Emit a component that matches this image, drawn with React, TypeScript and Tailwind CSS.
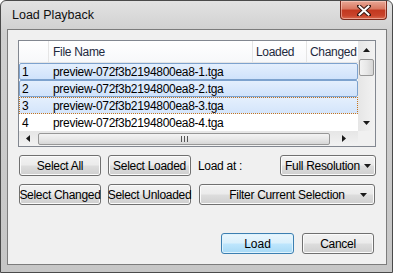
import React from "react";

const btn =
  "h-[21px] rounded-[3px] border border-[#707070] bg-[linear-gradient(#f2f2f2_0%,#ebebeb_48%,#dddddd_52%,#cfcfcf_100%)] shadow-[inset_0_0_0_1px_#fbfbfb] text-[12px] tracking-[-0.3px] whitespace-nowrap leading-none text-black flex items-center justify-center";

function Tri({ dir }: { dir: "up" | "down" | "left" | "right" }) {
  const pts: Record<string, string> = {
    up: "0,4 7,4 3.5,0",
    down: "0,0 7,0 3.5,4",
    left: "4,0 4,7 0,3.5",
    right: "0,0 0,7 4,3.5",
  };
  const vertical = dir === "up" || dir === "down";
  return (
    <svg width={vertical ? 7 : 4} height={vertical ? 4 : 7} viewBox={vertical ? "0 0 7 4" : "0 0 4 7"}>
      <polygon points={pts[dir]} fill="#1a1a1a" />
    </svg>
  );
}

function Row({ n, kind }: { n: number; kind: "sel" | "focus" | "none" }) {
  const cls =
    kind === "sel"
      ? "border border-[#7da2ce] bg-[linear-gradient(#e4effd,#cfe2fb)] rounded-[2px]"
      : kind === "focus"
      ? "border border-dotted border-[#c4741f] bg-[linear-gradient(#e4effd,#d4e5fb)]"
      : "border border-transparent";
  return (
    <div className={`h-[17px] flex items-center text-[12px] tracking-[-0.3px] text-black ${cls}`}>
      <span className="w-[30px] pl-[2px]">{n}</span>
      <span className="pl-[3px] whitespace-nowrap">preview-072f3b2194800ea8-{n}.tga</span>
    </div>
  );
}

export default function App() {
  return (
    <div
      className="w-[393px] h-[273px] bg-white"
      style={{ fontFamily: '"Liberation Sans", Arial, sans-serif' }}
    >
      <div className="w-[393px] h-[273px] border border-[#4a4a4a] rounded-t-[6px] bg-[linear-gradient(#e2e2e2,#cfcfcf_12%,#c6c6c6)] flex flex-col overflow-hidden">
        {/* title bar */}
        <div className="h-[28px] flex items-start justify-between shrink-0">
          <div className="pl-[11px] pt-[8px] text-[12.5px] text-[#101010] leading-none">Load Playback</div>
          <div className="mr-[5px] w-[47px] h-[19px] rounded-b-[4px] border border-t-0 border-[#7a2a1c] bg-[linear-gradient(#e9a896,#d8765f_45%,#c2381f_50%,#c9432a_80%,#d86a4f)] shadow-[inset_0_0_0_1px_rgba(255,220,210,0.5)] flex items-center justify-center">
            <svg width="14" height="11" viewBox="0 0 14 11">
              <path d="M2 1 L12 10 M12 1 L2 10" stroke="#3a1a14" strokeWidth="4" strokeLinecap="square" />
              <path d="M2.5 1.5 L11.5 9.5 M11.5 1.5 L2.5 9.5" stroke="#ffffff" strokeWidth="2" strokeLinecap="square" />
            </svg>
          </div>
        </div>
        {/* client */}
        <div className="ml-[6px] mr-[5px] mb-[7px] h-[236px] border border-[#7c7c7c] bg-[#f0f0f0] flex flex-col px-[10px] pt-[10px]">
          {/* list view */}
          <div className="h-[107px] border border-[#828790] bg-white flex flex-col">
            <div className="flex h-[90px]">
              <div className="w-[339px] flex flex-col">
                <div className="h-[22px] flex text-[12px] tracking-[-0.3px] text-[#1e2a3e] bg-[linear-gradient(#ffffff,#f7f8fa)] border-b border-[#e5e5e5]">
                  <div className="w-[30px] border-r border-[#e5e5e5]" />
                  <div className="w-[204px] border-r border-[#e5e5e5] flex items-center pl-[4px]">File Name</div>
                  <div className="w-[54px] border-r border-[#e5e5e5] flex items-center pl-[3px]">Loaded</div>
                  <div className="flex-1 flex items-center pl-[3px] whitespace-nowrap">Changed</div>
                </div>
                <div className="flex flex-col">
                  <Row n={1} kind="sel" />
                  <Row n={2} kind="sel" />
                  <Row n={3} kind="focus" />
                  <Row n={4} kind="none" />
                </div>
              </div>
              {/* vertical scrollbar */}
              <div className="w-[17px] bg-[linear-gradient(90deg,#e6e6e6,#f2f2f2)] flex flex-col items-center">
                <div className="h-[17px] flex items-center justify-center">
                  <Tri dir="up" />
                </div>
                <div className="mt-px w-[15px] h-[17px] rounded-[2px] border border-[#979797] bg-[linear-gradient(90deg,#f3f3f3,#e8e8e8_50%,#d6d6d6)]" />
                <div className="flex-1" />
                <div className="h-[17px] flex items-center justify-center">
                  <Tri dir="down" />
                </div>
              </div>
            </div>
            {/* horizontal scrollbar */}
            <div className="h-[15px] flex">
              <div className="w-[339px] flex items-center bg-[linear-gradient(#e6e6e6,#f2f2f2)]">
                <div className="w-[17px] flex items-center justify-center">
                  <Tri dir="left" />
                </div>
                <div className="ml-[2px] w-[292px] h-[12px] rounded-[2px] border border-[#979797] bg-[linear-gradient(#f3f3f3,#e8e8e8_50%,#d6d6d6)] flex items-center justify-center gap-[2px]">
                  <div className="w-px h-[6px] bg-[#555]" />
                  <div className="w-px h-[6px] bg-[#555]" />
                  <div className="w-px h-[6px] bg-[#555]" />
                </div>
                <div className="flex-1 flex items-center justify-center">
                  <Tri dir="right" />
                </div>
              </div>
              <div className="w-[17px] bg-[#f0f0f0]" />
            </div>
          </div>
          {/* button rows */}
          <div className="mt-[8px] flex items-center pl-px h-[21px]">
            <button className={`${btn} w-[82px]`}>Select All</button>
            <button className={`${btn} w-[83px] ml-[7px]`}>Select Loaded</button>
            <span className="ml-[7px] text-[12px] tracking-[-0.3px] text-black">Load at :</span>
            <button className={`${btn} w-[96px] ml-auto !justify-between px-[4px]`}>
              <span>Full Resolution</span>
              <Tri dir="down" />
            </button>
          </div>
          <div className="mt-[8px] flex items-center pl-px h-[21px]">
            <button className={`${btn} w-[82px]`}>Select Changed</button>
            <button className={`${btn} w-[83px] ml-[7px]`}>Select Unloaded</button>
            <button className={`${btn} w-[176px] ml-[8px] relative`}>
              <span>Filter Current Selection</span>
              <span className="absolute right-[7px] top-[8px] flex">
                <Tri dir="down" />
              </span>
            </button>
          </div>
          <div className="mt-[28px] flex justify-end pr-[2px] gap-[8px]">
            <button className="h-[21px] w-[73px] rounded-[3px] border border-[#3c7fb1] bg-[linear-gradient(#eaf6fd_0%,#d9f0fc_48%,#bee6fd_52%,#a7d9f5_100%)] shadow-[inset_0_0_0_1px_#dff3fd] text-[12px] leading-none text-black flex items-center justify-center">
              Load
            </button>
            <button className={`${btn} w-[72px]`}>Cancel</button>
          </div>
        </div>
      </div>
    </div>
  );
}
